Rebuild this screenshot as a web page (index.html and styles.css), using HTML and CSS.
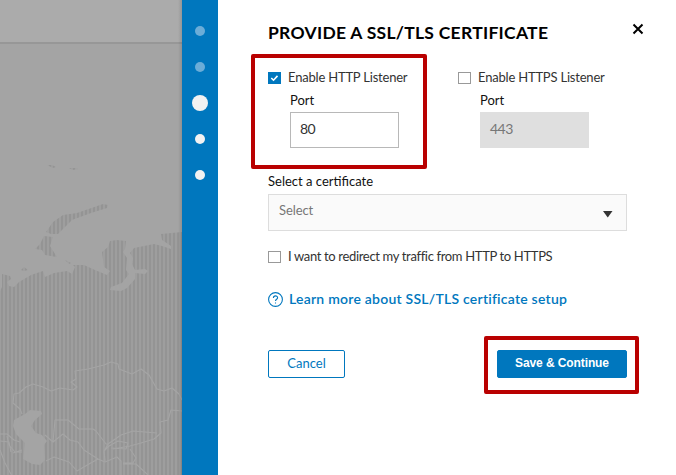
FILE: index.html
```html
<!DOCTYPE html>
<html lang="en">
<head>
<meta charset="utf-8">
<title>Provide a SSL/TLS certificate</title>
<link rel="stylesheet" href="styles.css">
</head>
<body>
<div class="app">
  <aside class="backdrop">
    <div class="topbar"></div>
    <svg class="map" width="182" height="431" viewBox="0 44 182 431">
      <defs>
        <pattern id="stripes" width="4" height="8" patternUnits="userSpaceOnUse">
          <rect width="4" height="8" fill="#9e9e9e"/>
          <rect x="1" width="2" height="8" fill="#949494"/>
        </pattern>
      </defs>
      <g fill="url(#stripes)">
        <path d="M0 291 L2 287 2 274 10 276 11 279 7 282 9 286 14 287 19 282 31 275 43 271 45 277 54 273 67 271 72 274 75 267 73 265 84 265 95 270 107 275 110 271 104 267 102 252 108 247 110 241 117 240 126 241 125 249 123 252 127 258 126 270 129 274 122 283 111 287 110 290 121 291 127 288 135 279 135 273 145 274 148 271 145 269 135 270 132 264 133 258 130 253 134 248 144 246 154 244 162 246 171 249 171 246 162 240 161 234 182 232 V475 H0 Z"/>
        <path d="M46 232 L53 222 63 215 77 213 103 204 108 205 107 208 91 213 72 220 66 226 58 234 51 234 Z"/>
        <path d="M44 236 L53 237 50 246 57 257 45 255 42 250 35 249 40 244 Z"/>
        <path d="M65 260l6 3-2 1zM21 270l3-3 4 3-4 1zM47 165l5 0 4 2-3 1zM69 168l6 0 3 1-5 1z"/>
      </g>
      <path fill="#a4a4a4" d="M14 420 L25 414 30 410 41 411 42 414 35 420 31 426 36 433 42 435 47 441 44 445 45 460 40 465 32 464 23 459 24 451 25 443 16 434 13 426 Z"/>
      <g class="borders">
        <path d="M22 414 L20 409 13 403 14 394 19 393 26 387 33 384 43 387 51 391 60 388 73 390 77 387 71 382 76 379 75 371 88 369 104 365 111 362 118 364 119 369 132 374 141 369 149 375 157 389 164 391 172 388 179 394 182 400"/>
        <path d="M182 411 L171 410 168 420 160 422 161 433 154 439 141 443 130 446 113 449 M157 433 L133 431 121 435 108 444 106 444 96 431 93 429 79 429 68 420 55 420 53 442 45 435"/>
        <path d="M53 442 L63 434 70 440 78 442 84 450 98 459 M104 451 L108 444 M46 461 L54 457 69 462 77 471 89 464 98 459 105 462 117 457 121 461 121 475 M105 461 L104 451 109 446 118 441 128 443 126 449 111 448 M130 449 L136 458 133 463 123 463 M123 464 L136 464 148 475"/>
        <path d="M0 434 L7 434 14 440 20 442 M7 436l2 9 6 7 7 0 M0 441l9 1 2 10 M0 450l5 13 7 13 M13 453l9-3"/>
      </g>
    </svg>
  </aside>
  <nav class="rail">
    <i class="dot done"></i><i class="dot done"></i><i class="dot current"></i><i class="dot"></i><i class="dot"></i>
  </nav>
  <main class="panel">
    <header class="head">
      <h1>PROVIDE A SSL/TLS CERTIFICATE</h1>
      <svg class="close" width="12" height="12" viewBox="0 0 12 12"><path d="M1.5 1.5l9 9M10.5 1.5l-9 9"/></svg>
    </header>
    <div class="listeners">
      <section class="listener">
        <label class="check"><span class="box on"><svg width="13" height="12" viewBox="0 0 13 12"><path d="M3.3 6l2.2 2.2 4-4.3"/></svg></span><span>Enable HTTP Listener</span></label>
        <div class="port">Port</div>
        <div class="field">80</div>
      </section>
      <section class="listener">
        <label class="check"><span class="box"></span><span>Enable HTTPS Listener</span></label>
        <div class="port">Port</div>
        <div class="field disabled">443</div>
      </section>
    </div>
    <div class="select-label">Select a certificate</div>
    <div class="select"><span>Select</span><svg width="10" height="7" viewBox="0 0 10 7"><path d="M0 0h9.5L4.75 6.5z"/></svg></div>
    <label class="check redirect"><span class="box"></span><span>I want to redirect my traffic from HTTP to HTTPS</span></label>
    <a class="learn"><svg width="15" height="15" viewBox="0 0 15 15"><circle cx="7.5" cy="7.5" r="6.9"/><path d="M5.4 5.9c0-2.7 4.2-2.7 4.2-.1 0 1.5-2.1 1.5-2.1 3.2M7.5 10.4v1.2"/></svg><span>Learn more about SSL/TLS certificate setup</span></a>
    <footer class="actions">
      <button class="btn cancel">Cancel</button>
      <button class="btn save">Save &amp; Continue</button>
    </footer>
  </main>
  <div class="mark mark-http"></div>
  <div class="mark mark-save"></div>
</div>
</body>
</html>
```

FILE: styles.css
```css
* { box-sizing: border-box; }
body { margin: 0; background: #fff; color: #111; font: 13px/16px Lato, "Open Sans", sans-serif; }
.app { position: relative; display: flex; width: 676px; height: 475px; overflow: hidden; }
.backdrop { position: relative; width: 182px; background: #a4a4a4; }
.backdrop::after { content: ""; position: absolute; inset: 0 0 0 auto; width: 4px; background: linear-gradient(90deg, transparent, rgba(0,0,0,.12)); }
.topbar { height: 44px; background: #ababab; border-bottom: 2px solid #979797; }
.map { display: block; }
.borders { fill: none; stroke: #a5a5a5; stroke-width: 1.1; stroke-linejoin: round; }
.rail { width: 36px; background: #0077be; display: flex; flex-direction: column; align-items: center; padding-top: 26px; gap: 26px; }
.dot { width: 10px; height: 10px; border-radius: 50%; background: #f2f2f2; flex: none; }
.done { background: #6badd8; }
.current { width: 16px; height: 16px; margin: -3px 0; }
.panel { width: 458px; padding: 22px 49px 0 50px; }
.head { display: flex; justify-content: space-between; height: 48px; }
h1 { margin: 0; font-size: 17.5px; line-height: 22px; font-weight: 700; letter-spacing: .28px; color: #000; white-space: nowrap; }
.close { margin: 1px -17px 0 0; fill: none; stroke: #000; stroke-width: 2; }
.listeners { display: flex; height: 104px; }
.listener { width: 190px; flex: none; }
.check { display: flex; align-items: center; gap: 7px; height: 16px; white-space: nowrap; letter-spacing: -.2px; color: #333; }
.check > span:last-child { position: relative; top: -1px; }
.redirect { letter-spacing: -.34px; }
.box { width: 13px; height: 12px; border: 1px solid #999; flex: none; }
.box.on { background: #0077be; border: 0; }
.box svg { display: block; fill: none; stroke: #fff; stroke-width: 1.6; }
.port { margin: 6px 0 4px 22px; }
.field { margin-left: 22px; width: 109px; height: 36px; border: 1px solid #b8b8b8; padding: 0 9px; line-height: 32px; font-size: 14px; letter-spacing: -.5px; color: #333; }
.field.disabled { background: #dfdfdf; border-color: #dfdfdf; color: #777; }
.select-label { height: 20px; line-height: 15px; }
.select { height: 37px; border: 1px solid #ddd; background: #fafafa; color: #777; display: flex; align-items: center; justify-content: space-between; padding: 0 13px 0 10px; }
.select span { padding-bottom: 5px; letter-spacing: -.1px; }
.select svg { margin-top: 3px; fill: #333; }
.redirect { margin-top: 18px; }
.learn { display: flex; align-items: center; gap: 6px; margin-top: 25px; height: 18px; color: #0077be; font-size: 14px; font-weight: 600; letter-spacing: .23px; white-space: nowrap; }
.learn svg { fill: none; stroke: #0077be; stroke-width: 1.1; }
.actions { display: flex; justify-content: space-between; margin-top: 42px; }
.btn { height: 28px; border: 1px solid #0077be; border-radius: 2px; padding: 0 0 2px; font: 13px/24px Lato, sans-serif; background: #fff; color: #0077be; }
.cancel { width: 77px; }
.save { width: 130px; background: #0077be; color: #fff; font-family: "Liberation Sans", sans-serif; font-weight: 700; font-size: 12px; letter-spacing: -.1px; }
.mark { position: absolute; border: 4px solid #b90000; border-radius: 2px; }
.mark-http { left: 251px; top: 54px; width: 176px; height: 115px; }
.mark-save { left: 484px; top: 336px; width: 155px; height: 58px; }
```
